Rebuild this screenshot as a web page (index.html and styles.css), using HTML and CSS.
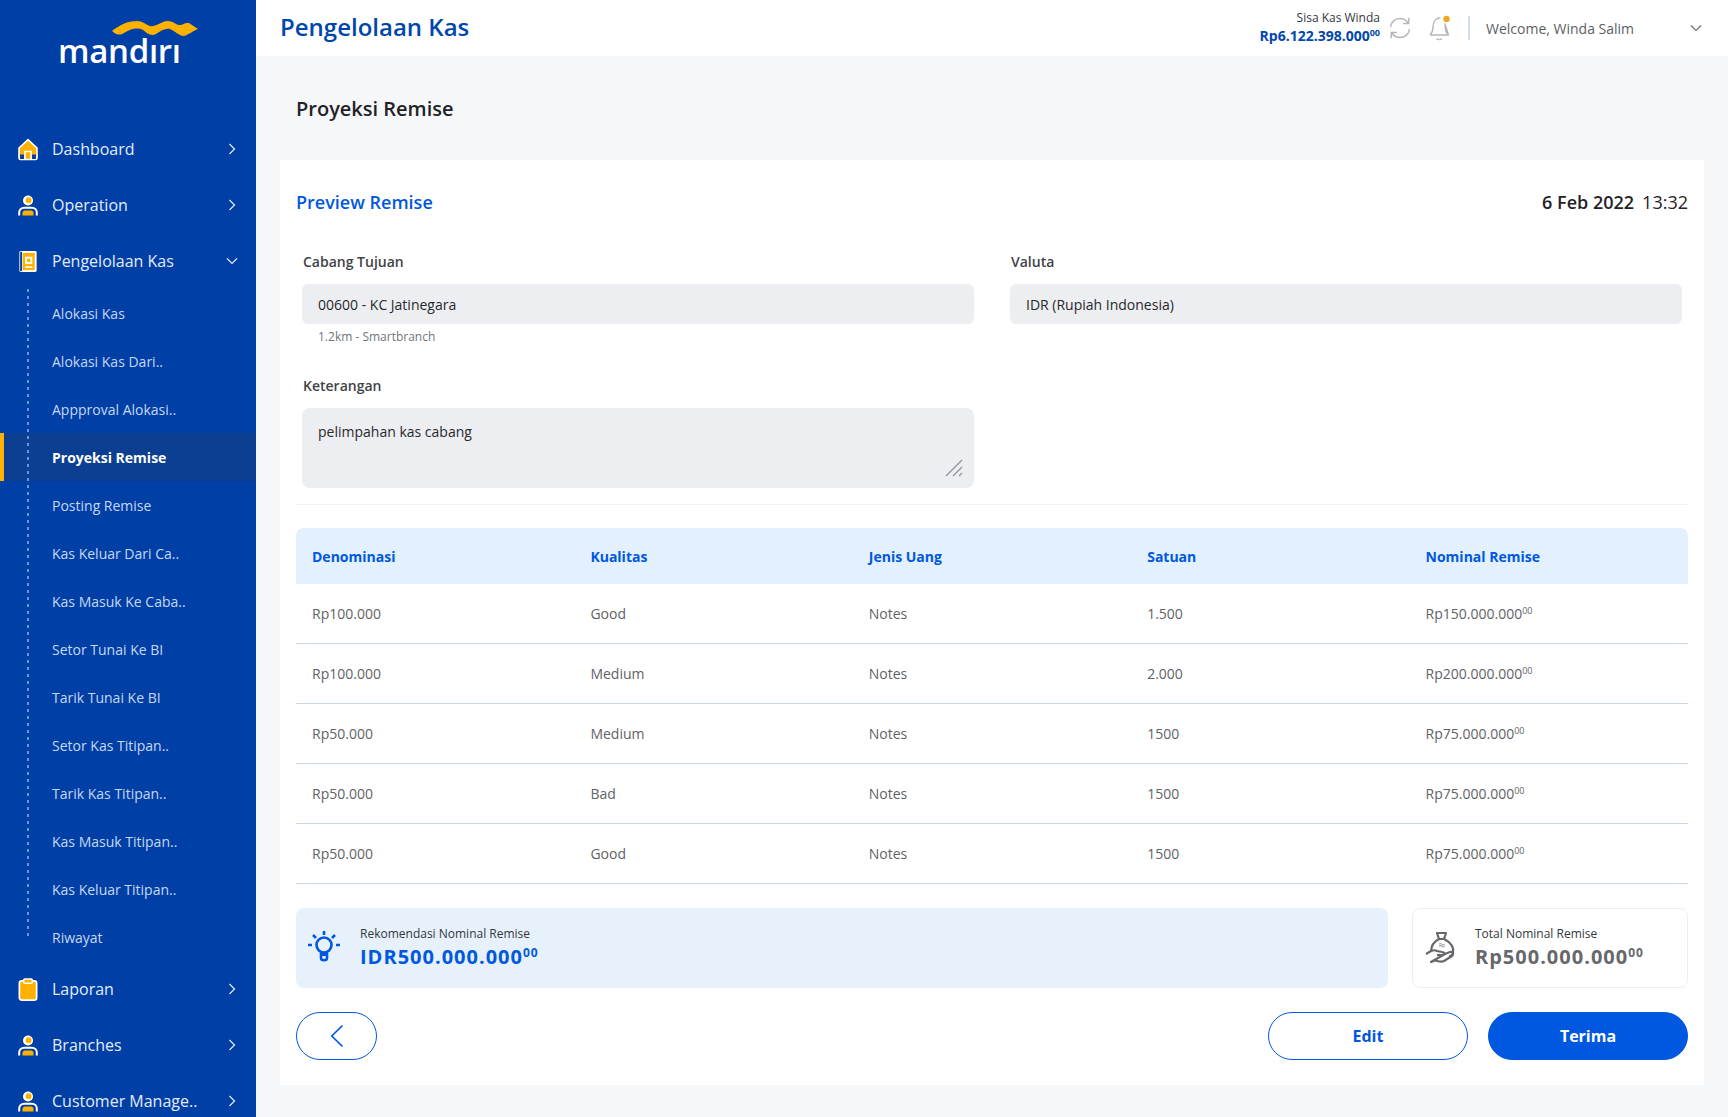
FILE: index.html
```html
<!DOCTYPE html>
<html lang="id">
<head>
<meta charset="utf-8">
<title>Proyeksi Remise</title>
<link rel="stylesheet" href="styles.css">
</head>
<body>
<svg class="defs" width="0" height="0" aria-hidden="true">
  <defs>
    <symbol id="chev-r" viewBox="0 0 8 14"><path d="M1.5 2 L6.5 7 L1.5 12" fill="none" stroke="currentColor" stroke-width="1.2"/></symbol>
    <symbol id="chev-d" viewBox="0 0 14 8"><path d="M2 1.5 L7 6.5 L12 1.5" fill="none" stroke="currentColor" stroke-width="1.2"/></symbol>
    <symbol id="person" viewBox="0 0 20 22">
      <circle cx="10" cy="6" r="5" fill="#fff"/><circle cx="10.6" cy="5.8" r="3" fill="#ffb100"/>
      <path d="M1.2 21 V18 C1.2 15 3.5 13.2 6 13.2 H14 C16.5 13.2 18.800 15 18.800 18 V21" fill="none" stroke="#fff" stroke-width="2"/>
      <path d="M4.500 21 V18.500 C4.500 17 5.500 16 7 16 H13 C14.500 16 15.500 17 15.500 18.500 V21 Z" fill="#ffb100"/>
    </symbol>
  </defs>
</svg>
<div class="app">
  <aside class="sidebar">
    <div class="logo">
      <svg class="logo-wave" viewBox="0 0 86 18" width="86" height="18" aria-hidden="true"><path d="M0 11 C8 5 15 1 25 1 C30 1 33 4 38 6 C42 7 46 4 51 2 C55 0 60 1 64 4 C67 6 70 5 74 3 L77 3 L86 9 C81 11 76 15 72 16 C67 16 63 11 58 9 C53 8 49 11 44 14 C39 17 35 13 31 10 C25 7 18 9 12 13 C7 16 3 14 0 11 Z" fill="#ffb100"/></svg>
      <span class="logo-text">mandırı</span>
    </div>
    <nav class="nav">
      <a class="nav-item">
        <svg class="nav-icon" viewBox="0 0 20 22" aria-hidden="true"><path d="M1 9.500 L10 1.200 L19 9.500 V19.500 C19 20.300 18.500 21 17.500 21 H2.500 C1.500 21 1 20.300 1 19.500 Z" fill="#ffb100" stroke="#fff" stroke-width="1.600" stroke-linejoin="round"/><path d="M2 16 H6 V20.500 H2 Z M14 16 H18 V20.500 H14 Z" fill="#003fa6"/><path d="M7 20.500 V13 H13 V20.500" fill="none" stroke="#fff" stroke-width="1.600"/></svg>
        <span class="nav-label">Dashboard</span>
        <svg class="chev"><use href="#chev-r"/></svg>
      </a>
      <a class="nav-item">
        <svg class="nav-icon"><use href="#person"/></svg>
        <span class="nav-label">Operation</span>
        <svg class="chev"><use href="#chev-r"/></svg>
      </a>
      <a class="nav-item">
        <svg class="nav-icon" viewBox="0 0 20 24" aria-hidden="true"><rect x="1" y="1" width="18" height="22" rx="1.500" fill="#fff"/><rect x="4.500" y="3" width="12.500" height="18" fill="#ffb100"/><rect x="1.800" y="2" width="2" height="20" fill="#003fa6"/><rect x="7" y="7" width="7.500" height="7.500" fill="#fff"/><rect x="9" y="9" width="3.500" height="3.500" fill="#ffb100"/><rect x="7" y="17" width="7.500" height="1.600" fill="#fff"/></svg>
        <span class="nav-label">Pengelolaan Kas</span>
        <svg class="chev-open"><use href="#chev-d"/></svg>
      </a>
      <div class="sub">
        <a class="sub-item">Alokasi Kas</a>
        <a class="sub-item">Alokasi Kas Dari..</a>
        <a class="sub-item">Appproval Alokasi..</a>
        <a class="sub-item active">Proyeksi Remise</a>
        <a class="sub-item">Posting Remise</a>
        <a class="sub-item">Kas Keluar Dari Ca..</a>
        <a class="sub-item">Kas Masuk Ke Caba..</a>
        <a class="sub-item">Setor Tunai Ke BI</a>
        <a class="sub-item">Tarik Tunai Ke BI</a>
        <a class="sub-item">Setor Kas Titipan..</a>
        <a class="sub-item">Tarik Kas Titipan..</a>
        <a class="sub-item">Kas Masuk Titipan..</a>
        <a class="sub-item">Kas Keluar Titipan..</a>
        <a class="sub-item">Riwayat</a>
      </div>
      <a class="nav-item">
        <svg class="nav-icon" viewBox="0 0 20 24" aria-hidden="true"><rect x="1" y="3" width="18" height="20" rx="2.500" fill="#ffb100" stroke="#fff" stroke-width="1.800"/><rect x="5.500" y="1" width="9" height="4.500" rx="1" fill="#ffb100" stroke="#fff" stroke-width="1.400"/></svg>
        <span class="nav-label">Laporan</span>
        <svg class="chev"><use href="#chev-r"/></svg>
      </a>
      <a class="nav-item">
        <svg class="nav-icon"><use href="#person"/></svg>
        <span class="nav-label">Branches</span>
        <svg class="chev"><use href="#chev-r"/></svg>
      </a>
      <a class="nav-item">
        <svg class="nav-icon"><use href="#person"/></svg>
        <span class="nav-label">Customer Manage..</span>
        <svg class="chev"><use href="#chev-r"/></svg>
      </a>
    </nav>
  </aside>

  <div class="main">
    <header class="topbar">
      <h1 class="app-title">Pengelolaan Kas</h1>
      <div class="top-right">
        <div class="balance">
          <div class="balance-label">Sisa Kas Winda</div>
          <div class="balance-value">Rp6.122.398.000<sup class="cents-top">00</sup></div>
        </div>
        <svg class="refresh" viewBox="0 0 24 24" aria-hidden="true"><g fill="none" stroke="#b5b7ba" stroke-width="1.500"><path d="M2.500 11 C3 6 7 2.500 12 2.500 C15.500 2.500 18.500 4.500 20 7"/><path d="M21.500 13 C21 18 17 21.500 12 21.500 C8.500 21.500 5.500 19.500 4 17"/><path d="M20.700 1.800 V7.500 H15"/><path d="M3.300 22.200 V16.500 H9"/></g></svg>
        <svg class="bell" viewBox="0 0 24 26" aria-hidden="true"><path d="M2 20 C4 18 5 16.500 5 12 C5 7 7.500 3.500 11 3 C11.500 3 12 3 12.500 3 M17 9 C17.200 10 17.200 11 17.200 12 C17.200 16.500 18.500 18 20.500 20 Z M2 20 H20.500" fill="none" stroke="#b5b7ba" stroke-width="1.400" stroke-linejoin="round"/><path d="M8.500 23.500 C10 25 12.500 25 14 23.500" fill="none" stroke="#b5b7ba" stroke-width="1.400"/><circle cx="18.500" cy="4" r="3.200" fill="#f5a623"/></svg>
        <div class="vsep"></div>
        <div class="welcome">
          <span>Welcome, Winda Salim</span>
          <svg class="chev-user"><use href="#chev-d"/></svg>
        </div>
      </div>
    </header>

    <div class="content">
      <h2 class="page-title">Proyeksi Remise</h2>
      <section class="card">
        <div class="card-head">
          <h3 class="card-title">Preview Remise</h3>
          <div class="stamp"><b>6 Feb 2022</b><span>13:32</span></div>
        </div>

        <div class="form">
          <div class="field">
            <div class="label">Cabang Tujuan</div>
            <div class="input">00600 - KC Jatinegara</div>
            <div class="hint">1.2km - Smartbranch</div>
          </div>
          <div class="field">
            <div class="label">Valuta</div>
            <div class="input">IDR (Rupiah Indonesia)</div>
          </div>
          <div class="field field-note">
            <div class="label">Keterangan</div>
            <div class="textarea">pelimpahan kas cabang
              <svg class="grip" viewBox="0 0 18 18" aria-hidden="true"><path d="M1 17 L17 1 M8 17 L17 8 M14 17 L17 14" stroke="#8f9296" stroke-width="1.200" fill="none"/></svg>
            </div>
          </div>
        </div>

        <div class="divider"></div>

        <table class="table">
          <thead>
            <tr><th>Denominasi</th><th>Kualitas</th><th>Jenis Uang</th><th>Satuan</th><th>Nominal Remise</th></tr>
          </thead>
          <tbody>
            <tr><td>Rp100.000</td><td>Good</td><td>Notes</td><td>1.500</td><td>Rp150.000.000<sup class="cents">00</sup></td></tr>
            <tr><td>Rp100.000</td><td>Medium</td><td>Notes</td><td>2.000</td><td>Rp200.000.000<sup class="cents">00</sup></td></tr>
            <tr><td>Rp50.000</td><td>Medium</td><td>Notes</td><td>1500</td><td>Rp75.000.000<sup class="cents">00</sup></td></tr>
            <tr><td>Rp50.000</td><td>Bad</td><td>Notes</td><td>1500</td><td>Rp75.000.000<sup class="cents">00</sup></td></tr>
            <tr><td>Rp50.000</td><td>Good</td><td>Notes</td><td>1500</td><td>Rp75.000.000<sup class="cents">00</sup></td></tr>
          </tbody>
        </table>

        <div class="summary">
          <div class="sum-box sum-rec">
            <svg class="sum-icon-rec" viewBox="0 0 34 36" aria-hidden="true"><g fill="none" stroke="#0058e0" stroke-width="2.600"><circle cx="17" cy="15" r="7.500"/><path d="M14 23 V28 C14 31 20 31 20 28 V23"/><path d="M17 1 V5 M1 15 H5 M29 15 H33 M6 5 L9 8 M28 5 L25 8"/></g><rect x="14" y="23" width="6" height="3" fill="#0058e0"/></svg>
            <div class="sum-text">
              <div class="sum-label">Rekomendasi Nominal Remise</div>
              <div class="sum-value rec">IDR500.000.000<sup class="cents-big">00</sup></div>
            </div>
          </div>
          <div class="sum-box sum-total">
            <svg class="sum-icon-total" viewBox="0 0 32 34" aria-hidden="true"><g fill="none" stroke="#66686b" stroke-width="2.200" stroke-linejoin="round"><path d="M12 2 H21 L19 8 H14 Z"/><path d="M14 8 C8 11 6 16 6 21 M19 8 C25 11 29 16 28 22 C27.500 24 26 25 24 25.500"/><path d="M1 23 L6 20 C8 19 10 19 12 20 L17 21 C20 21 20 24 17 24 H12 M20 23 L25 21 C28 20 29 23 27 25 L19 30 C16 31.500 13 30 10 29.500 L6 31 Z"/></g><text x="14" y="16" class="rp-mark">Rp</text></svg>
            <div class="sum-text">
              <div class="sum-label">Total Nominal Remise</div>
              <div class="sum-value total">Rp500.000.000<sup class="cents-big">00</sup></div>
            </div>
          </div>
        </div>

        <div class="actions">
          <button class="btn btn-back" aria-label="Kembali"><svg class="back-icon" viewBox="0 0 14 24"><path d="M12.500 1.500 L1.800 12 L12.500 22.500" fill="none" stroke="#0058e0" stroke-width="1.700"/></svg></button>
          <div class="actions-right">
            <button class="btn btn-outline">Edit</button>
            <button class="btn btn-solid">Terima</button>
          </div>
        </div>
      </section>
    </div>
  </div>
</div>
</body>
</html>
```

FILE: styles.css
```css
* { box-sizing: border-box; }
html, body { margin: 0; padding: 0; height: 1117px; overflow: hidden; }
body { font-family: "Open Sans", "Liberation Sans", sans-serif; color: #1f2226; background: #f6f7f9; }
h1, h2, h3 { margin: 0; }
.defs { position: absolute; }

.app { display: flex; height: 1117px; }

/* Sidebar */
.sidebar { width: 256px; flex: none; height: 1117px; overflow: hidden; background: #003fa6; color: #e4ecf9; }
.logo { height: 121px; padding: 20px 0 0 58px; position: relative; }
.logo-wave { position: absolute; left: 112px; top: 20px; }
.logo-text { display: block; margin-top: 11px; font-size: 33px; line-height: 40px; font-weight: 600; color: #fff; letter-spacing: -0.3px; }
.nav { display: flex; flex-direction: column; }
.nav-item { height: 56px; flex: none; display: flex; align-items: center; padding-left: 18px; font-size: 16px; }
.nav-icon { width: 20px; height: 23px; flex: none; }
.nav-label { margin-left: 14px; flex: 1; }
.chev { width: 8px; height: 14px; margin-right: 20px; color: #e4ecf9; }
.chev-open { width: 14px; height: 8px; margin-right: 17px; color: #e4ecf9; }
.sub { position: relative; }
.sub::before { content: ""; position: absolute; left: 27px; top: 0; bottom: 24px; width: 2px; background: repeating-linear-gradient(to bottom, #6d95d6 0 3px, transparent 3px 7px); z-index: 1; }
.sub-item { display: flex; align-items: center; height: 48px; padding-left: 52px; font-size: 14px; color: #c6d8f3; }
.sub-item.active { background: #0c3f92; color: #fff; font-weight: 700; box-shadow: inset 4px 0 0 #ffb100; }

/* Main */
.main { flex: 1; min-width: 0; display: flex; flex-direction: column; }
.topbar { height: 56px; flex: none; background: #fff; display: flex; align-items: center; justify-content: space-between; padding: 0 24px; }
.app-title { font-size: 24px; line-height: 32px; font-weight: 600; color: #0047ab; margin-top: -2px; }
.top-right { display: flex; align-items: center; }
.balance { text-align: right; width: 200px; }
.balance-label { font-size: 12px; line-height: 16px; color: #33373b; }
.balance-value { font-size: 14px; line-height: 20px; font-weight: 700; color: #0047ab; }
.cents-top { font-size: 9px; line-height: 0; vertical-align: 5px; }
.refresh { width: 24px; height: 24px; margin-left: 8px; }
.bell { width: 24px; height: 26px; margin-left: 16px; }
.vsep { width: 2px; height: 24px; background: #d5dde8; margin-left: 16px; }
.welcome { width: 218px; margin-left: 16px; display: flex; align-items: center; justify-content: space-between; font-size: 14px; color: #5c6065; padding-right: 1px; }
.chev-user { width: 14px; height: 8px; color: #70757a; margin-right: 0; }

.content { flex: 1; padding: 0 24px; }
.page-title { font-size: 20px; line-height: 28px; font-weight: 600; color: #1f2226; padding: 39px 0 37px 16px; }

.card { background: #fff; padding: 26px 16px 25px; }
.card-head { display: flex; align-items: center; justify-content: space-between; height: 32px; }
.card-title { font-size: 18px; line-height: 32px; font-weight: 600; color: #0058e0; }
.stamp { font-size: 18px; color: #1f2226; display: flex; gap: 8px; }
.stamp b { font-weight: 600; }

.form { display: grid; grid-template-columns: 672px 672px; column-gap: 36px; padding: 0 6px; margin-top: 34px; }
.field-note { margin-top: 29px; grid-column: 1; }
.label { font-size: 14px; line-height: 20px; font-weight: 600; color: #3f4347; padding-left: 1px; margin-bottom: 12px; }
.input { height: 40px; background: #edeef1; border-radius: 6px; padding: 0 16px; display: flex; align-items: center; font-size: 14px; color: #26292d; }
.hint { font-size: 12px; line-height: 20px; color: #71757a; padding-left: 16px; margin-top: 3px; }
.textarea { height: 80px; background: #edeef1; border-radius: 8px; padding: 14px 16px; font-size: 14px; line-height: 20px; color: #26292d; position: relative; }
.grip { position: absolute; right: 11px; bottom: 11px; width: 18px; height: 18px; }
.divider { height: 1px; background: #eef1f5; margin-top: 16px; }

.table { width: 100%; margin-top: 23px; border-collapse: separate; border-spacing: 0; table-layout: fixed; font-size: 14px; }
.table th { height: 56px; background: #e3f0fd; color: #0058e0; font-weight: 700; text-align: left; padding: 0 16px; }
.table th:first-child { border-top-left-radius: 8px; }
.table th:last-child { border-top-right-radius: 8px; }
.table td { height: 60px; border-bottom: 1px solid #cdd6e6; padding: 0 16px; color: #5f6266; }
.cents { font-size: 9px; line-height: 0; vertical-align: 5px; }

.summary { display: flex; gap: 24px; margin-top: 24px; }
.sum-box { height: 80px; border-radius: 8px; display: flex; align-items: center; }
.sum-rec { flex: 1; background: #e6f1fb; padding-left: 11px; }
.sum-total { width: 276px; flex: none; border: 1px solid #edeef1; padding-left: 12px; }
.sum-icon-rec { width: 34px; height: 36px; flex: none; margin-right: 19px; }
.sum-icon-total { width: 32px; height: 34px; flex: none; margin-right: 18px; }
.rp-mark { font-size: 5px; fill: #66686b; font-family: "Open Sans", sans-serif; }
.sum-label { font-size: 12px; line-height: 18px; color: #33373b; }
.sum-value { font-size: 20px; line-height: 28px; font-weight: 700; letter-spacing: 1px; }
.sum-value.rec { color: #0058e0; }
.sum-value.total { color: #66686b; }
.cents-big { font-size: 12px; line-height: 0; vertical-align: 7px; }

.actions { display: flex; justify-content: space-between; margin-top: 24px; }
.actions-right { display: flex; gap: 20px; }
.btn { height: 48px; border-radius: 24px; font-family: inherit; font-size: 16px; font-weight: 700; border: 1px solid #0058e0; padding: 0; display: flex; align-items: center; justify-content: center; }
.btn-back { width: 81px; background: #fff; }
.back-icon { width: 14px; height: 24px; }
.btn-outline { width: 200px; background: #fff; color: #0058e0; }
.btn-solid { width: 200px; background: #0058e0; color: #fff; }
```
